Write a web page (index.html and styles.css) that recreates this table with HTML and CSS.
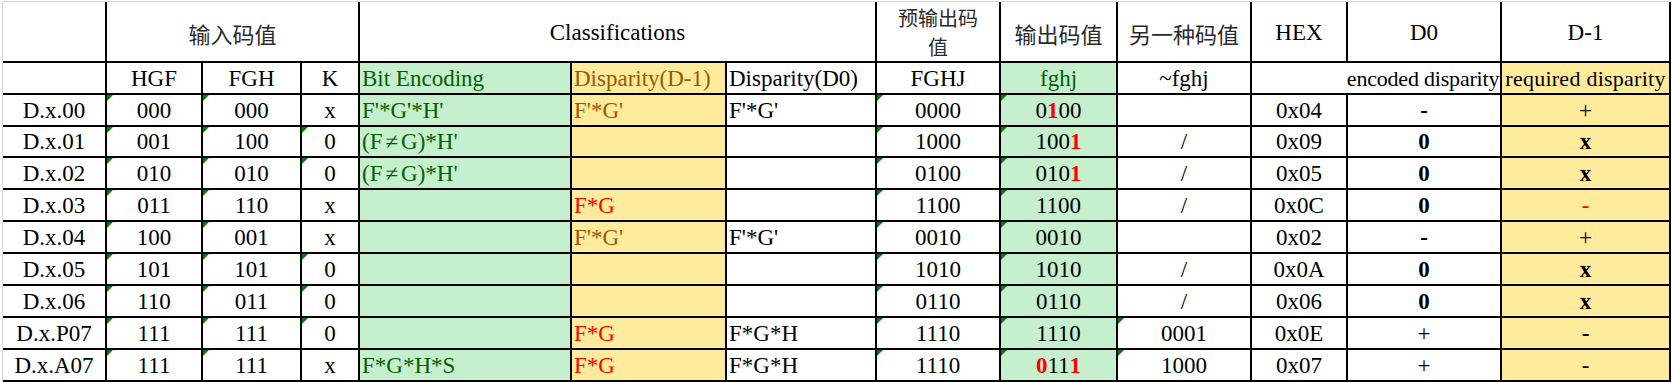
FILE: index.html
```html
<!DOCTYPE html>
<html lang="zh">
<head>
<meta charset="utf-8">
<title>8b/10b 3b4b table</title>
<link rel="stylesheet" href="styles.css">
</head>
<body>
<div class="sheet">
  <!-- header row 1 -->
  <div class="c h1"></div>
  <div class="c h1 span3 cjk">输入码值</div>
  <div class="c h1 span3">Classifications</div>
  <div class="c h1 cjk two"><span class="ln">预输出码</span><span class="ln">值</span></div>
  <div class="c h1 cjk">输出码值</div>
  <div class="c h1 cjk">另一种码值</div>
  <div class="c h1">HEX</div>
  <div class="c h1">D0</div>
  <div class="c h1">D-1</div>

  <!-- header row 2 -->
  <div class="c"></div>
  <div class="c">HGF</div>
  <div class="c">FGH</div>
  <div class="c">K</div>
  <div class="c l g gt">Bit Encoding</div>
  <div class="c l y yt">Disparity(D-1)</div>
  <div class="c l">Disparity(D0)</div>
  <div class="c">FGHJ</div>
  <div class="c g gt">fghj</div>
  <div class="c">~fghj</div>
  <div class="c span2 enc">encoded disparity</div>
  <div class="c y req">required disparity</div>

  <!-- D.x.00 -->
  <div class="c">D.x.00</div>
  <div class="c t">000</div>
  <div class="c t">000</div>
  <div class="c">x</div>
  <div class="c l g gt">F'*G'*H'</div>
  <div class="c l y yt">F'*G'</div>
  <div class="c l">F'*G'</div>
  <div class="c t">0000</div>
  <div class="c g t"><span>0<b class="red">1</b>00</span></div>
  <div class="c"></div>
  <div class="c">0x04</div>
  <div class="c"><b>-</b></div>
  <div class="c y">+</div>

  <!-- D.x.01 -->
  <div class="c">D.x.01</div>
  <div class="c t">001</div>
  <div class="c t">100</div>
  <div class="c t">0</div>
  <div class="c l g gt"><span>(F<span class="ne">≠</span>G)*H'</span></div>
  <div class="c l y"></div>
  <div class="c l"></div>
  <div class="c t">1000</div>
  <div class="c g t"><span>100<b class="red">1</b></span></div>
  <div class="c">/</div>
  <div class="c">0x09</div>
  <div class="c"><b>0</b></div>
  <div class="c y"><b>x</b></div>

  <!-- D.x.02 -->
  <div class="c">D.x.02</div>
  <div class="c t">010</div>
  <div class="c t">010</div>
  <div class="c t">0</div>
  <div class="c l g gt"><span>(F<span class="ne">≠</span>G)*H'</span></div>
  <div class="c l y"></div>
  <div class="c l"></div>
  <div class="c t">0100</div>
  <div class="c g t"><span>010<b class="red">1</b></span></div>
  <div class="c">/</div>
  <div class="c">0x05</div>
  <div class="c"><b>0</b></div>
  <div class="c y"><b>x</b></div>

  <!-- D.x.03 -->
  <div class="c">D.x.03</div>
  <div class="c t">011</div>
  <div class="c t">110</div>
  <div class="c">x</div>
  <div class="c l g"></div>
  <div class="c l y red">F*G</div>
  <div class="c l"></div>
  <div class="c t">1100</div>
  <div class="c g t">1100</div>
  <div class="c">/</div>
  <div class="c">0x0C</div>
  <div class="c"><b>0</b></div>
  <div class="c y red">-</div>

  <!-- D.x.04 -->
  <div class="c">D.x.04</div>
  <div class="c t">100</div>
  <div class="c t">001</div>
  <div class="c">x</div>
  <div class="c l g"></div>
  <div class="c l y yt">F'*G'</div>
  <div class="c l">F'*G'</div>
  <div class="c t">0010</div>
  <div class="c g t">0010</div>
  <div class="c"></div>
  <div class="c">0x02</div>
  <div class="c"><b>-</b></div>
  <div class="c y">+</div>

  <!-- D.x.05 -->
  <div class="c">D.x.05</div>
  <div class="c t">101</div>
  <div class="c t">101</div>
  <div class="c t">0</div>
  <div class="c l g"></div>
  <div class="c l y"></div>
  <div class="c l"></div>
  <div class="c t">1010</div>
  <div class="c g t">1010</div>
  <div class="c">/</div>
  <div class="c">0x0A</div>
  <div class="c"><b>0</b></div>
  <div class="c y"><b>x</b></div>

  <!-- D.x.06 -->
  <div class="c">D.x.06</div>
  <div class="c t">110</div>
  <div class="c t">011</div>
  <div class="c t">0</div>
  <div class="c l g"></div>
  <div class="c l y"></div>
  <div class="c l"></div>
  <div class="c t">0110</div>
  <div class="c g t">0110</div>
  <div class="c">/</div>
  <div class="c">0x06</div>
  <div class="c"><b>0</b></div>
  <div class="c y"><b>x</b></div>

  <!-- D.x.P07 -->
  <div class="c">D.x.P07</div>
  <div class="c t">111</div>
  <div class="c t">111</div>
  <div class="c t">0</div>
  <div class="c l g"></div>
  <div class="c l y red">F*G</div>
  <div class="c l">F*G*H</div>
  <div class="c t">1110</div>
  <div class="c g t">1110</div>
  <div class="c t">0001</div>
  <div class="c">0x0E</div>
  <div class="c">+</div>
  <div class="c y"><b>-</b></div>

  <!-- D.x.A07 -->
  <div class="c">D.x.A07</div>
  <div class="c t">111</div>
  <div class="c t">111</div>
  <div class="c">x</div>
  <div class="c l g gt">F*G*H*S</div>
  <div class="c l y red">F*G</div>
  <div class="c l">F*G*H</div>
  <div class="c t">1110</div>
  <div class="c g t"><span><b class="red">0</b>11<b class="red">1</b></span></div>
  <div class="c t">1000</div>
  <div class="c">0x07</div>
  <div class="c">+</div>
  <div class="c y">-</div>
</div>
</body>
</html>
```

FILE: styles.css
```css
html, body {
  margin: 0;
  padding: 0;
  background: #ffffff;
}

.sheet {
  display: grid;
  grid-template-columns: 102px 94px 97px 56px 210px 153px 148px 122px 115px 132px 94px 152px 167px;
  grid-template-rows: 59px 30px 30px 29px repeat(7, 30px);
  gap: 2px;
  width: max-content;
  margin: 1px 0 0 2px;
  padding: 0 2px 2px 0;
  border-top: 1px solid #d4d4d4;
  border-left: 1px solid #d4d4d4;
  background: #000000;
  font-family: "Liberation Serif", "Noto Sans CJK SC", serif;
  font-size: 23px;
  line-height: 26px;
  color: #000000;
}

.c {
  position: relative;
  display: flex;
  align-items: flex-end;
  justify-content: center;
  padding: 0 2px 1px 2px;
  background: #ffffff;
  white-space: nowrap;
}

.h1 {
  align-items: center;
  padding-top: 3px;
  padding-bottom: 0;
}

.cjk {
  font-family: "Noto Sans CJK SC", "Liberation Serif", sans-serif;
  font-size: 22px;
  color: #2a2a2a;
}

.two {
  flex-direction: column;
  justify-content: center;
  align-items: center;
  padding-top: 1px;
  font-size: 20px;
  line-height: 29px;
}

.ln {
  display: block;
}

.span3 { grid-column: span 3; }
.span2 { grid-column: span 2; }

.enc {
  padding-left: 96px;
  font-size: 22px;
  letter-spacing: -0.2px;
}

.req {
  font-size: 22px;
  letter-spacing: 0.25px;
}

.l { justify-content: flex-start; padding-left: 2px; }

.g { background: #c6efce; }
.gt { color: #006100; }
.y { background: #ffeb9c; }
.yt { color: #9c5700; }
.red { color: #ff0000; }

b { font-weight: bold; }

.ne {
  padding: 0 3px;
}

.t::before {
  content: "";
  position: absolute;
  left: 0;
  top: 0;
  width: 0;
  height: 0;
  border-top: 6px solid #008000;
  border-right: 6px solid transparent;
}
```
